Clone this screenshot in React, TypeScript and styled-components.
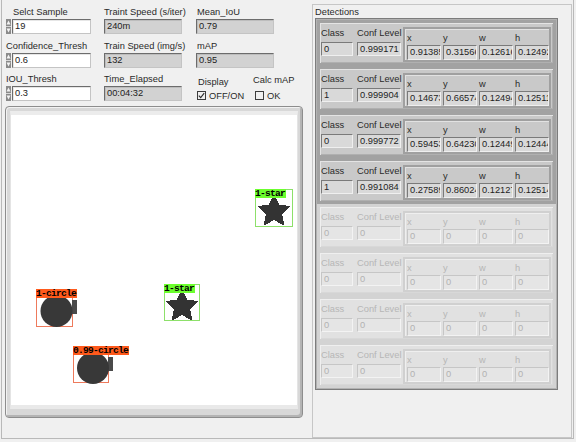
import React from "react";
import styled, { createGlobalStyle } from "styled-components";

const GlobalStyle = createGlobalStyle`
  html, body { margin: 0; padding: 0; background: #f0f0f0; }
  body {
    font-family: "Liberation Sans", Arial, sans-serif;
    font-size: 9.3px;
    color: #222;
  }
  * { box-sizing: border-box; }
`;

const Window = styled.div`
  width: 576px;
  height: 442px;
  padding-left: 1px;
  background: #f0f0f0;
  overflow: hidden;
`;

const Frame = styled.div`
  width: 573px;
  height: 439px;
  border: 1px solid #b9b9b9;
  border-top: none;
  display: flex;
`;

const LeftColumn = styled.div`
  width: 310px;
  padding: 6px 0 0 3px;
  display: flex;
  flex-direction: column;
`;

const Controls = styled.div`
  margin-left: 1px;
  display: grid;
  grid-template-columns: 98px 92px 1fr;
  grid-auto-rows: 28px;
  row-gap: 5.5px;
`;

const Control = styled.div`
  display: flex;
  flex-direction: column;
`;

const Label = styled.div<{ $indent?: number }>`
  height: 12px;
  line-height: 12px;
  padding-left: ${(p) => p.$indent ?? 0}px;
  color: #2a2a2a;
  white-space: nowrap;
`;

const NumWrap = styled.div`
  margin-top: 1px;
  display: flex;
  gap: 1px;
  height: 15px;
`;

const Box = styled.div<{ $w: number; $white?: boolean }>`
  width: ${(p) => p.$w}px;
  height: 15px;
  line-height: 13px;
  padding-left: 2px;
  background: ${(p) => (p.$white ? "#ffffff" : "#d2d2d2")};
  border: 1px solid;
  border-color: #6c6c6c #c4c4c4 #c4c4c4 #6c6c6c;
  box-shadow: inset 1px 1px 0 ${(p) => (p.$white ? "#e6e6e6" : "#bdbdbd")};
  color: #222;
  white-space: nowrap;
  overflow: hidden;
`;

const IndicatorBox = styled(Box)`
  margin-top: 1px;
`;

const CheckGroup = styled.div`
  display: flex;
`;

const CheckCol = styled.div<{ $w: number; $top: number; $gap: number }>`
  width: ${(p) => p.$w}px;
  padding-top: ${(p) => p.$top}px;
  display: flex;
  flex-direction: column;
  gap: ${(p) => p.$gap}px;
`;

const CheckLine = styled.div<{ $indent: number }>`
  display: flex;
  align-items: center;
  gap: 3px;
  height: 12px;
  padding-left: ${(p) => p.$indent}px;
  color: #2a2a2a;
`;

const CheckSquare = styled.span`
  width: 9px;
  height: 9px;
  border: 1px solid #3c3c3c;
  display: inline-flex;
  align-items: center;
  justify-content: center;
`;

const CanvasFrame = styled.div`
  margin-top: 5px;
  width: 298px;
  height: 312px;
  border: 1px solid #8d8d8d;
  border-radius: 4px;
  background: #d8d8d8;
  box-shadow: inset 1px 1px 0 #f2f2f2, inset -2px -2px 0 #b4b4b4;
  padding: 4px 4px 0 4px;
`;

const CanvasArea = styled.div`
  position: relative;
  width: 288px;
  height: 298px;
  background: #ffffff;
  border: 1px solid #e4e4e4;
  border-top: 4px solid #ececec;
  border-bottom: 4px solid #e9e9e9;
`;

const Detection = styled.div<{ $x: number; $y: number; $w: number; $h: number; $c: string }>`
  position: absolute;
  left: ${(p) => p.$x}px;
  top: ${(p) => p.$y}px;
  width: ${(p) => p.$w}px;
  height: ${(p) => p.$h}px;
  border: 1px solid ${(p) => p.$c};
`;

const Shape = styled.svg`
  position: absolute;
  left: -1px;
  top: -1px;
  overflow: visible;
`;

const DetLabel = styled.div<{ $bg: string }>`
  position: absolute;
  left: -1px;
  top: -1px;
  height: 9px;
  line-height: 9px;
  padding-right: 1px;
  background: ${(p) => p.$bg};
  font-family: "Liberation Mono", "Courier New", monospace;
  font-weight: bold;
  font-size: 9.6px;
  letter-spacing: -0.76px;
  color: #000;
  white-space: nowrap;
  overflow: hidden;
`;

const GroupBox = styled.div`
  margin-top: 4px;
  width: 260px;
  height: 434px;
  border: 1px solid #c6c6c6;
  padding: 1px 0 0 2px;
`;

const GroupTitle = styled.div`
  height: 12px;
  line-height: 12px;
  color: #2a2a2a;
`;

const ArrayFrame = styled.div`
  width: 243px;
  border: 1px solid #7c7c7c;
  padding: 1px;
  background: #b2b2b2;
  display: flex;
  flex-direction: column;
`;

const Row = styled.div<{ $on: boolean }>`
  height: 46px;
  border: 3px solid ${(p) => (p.$on ? "#a2a2a2" : "#d3d3d3")};
  box-shadow: inset 1px 1px 0 ${(p) => (p.$on ? "#e4e4e4" : "#efefef")},
    inset -1px -1px 0 ${(p) => (p.$on ? "#b0b0b0" : "#d8d8d8")};
  background: ${(p) => (p.$on ? "#c9c9c9" : "#e1e1e1")};
  padding: 4px 0 0 1px;
  display: flex;
  align-items: flex-start;
`;

const Fields = styled.div`
  display: grid;
  grid-template-columns: 32px 44px;
  column-gap: 4px;
`;

const FieldLabel = styled.div<{ $on: boolean }>`
  height: 12px;
  line-height: 12px;
  color: ${(p) => (p.$on ? "#2a2a2a" : "#b6b6b6")};
  white-space: nowrap;
`;

const ValueBox = styled.div<{ $on: boolean; $h: number; $top: number }>`
  margin-top: ${(p) => p.$top}px;
  height: ${(p) => p.$h}px;
  line-height: ${(p) => p.$h - 2}px;
  padding-left: 2px;
  background: ${(p) => (p.$on ? "#d9d9d9" : "#e5e5e5")};
  border: 1px solid;
  border-color: ${(p) =>
    p.$on ? "#7a7a7a #efefef #efefef #7a7a7a" : "#c6c6c6 #f3f3f3 #f3f3f3 #c6c6c6"};
  color: ${(p) => (p.$on ? "#1e1e1e" : "#b2b2b2")};
  white-space: nowrap;
  overflow: hidden;
`;

const Cluster = styled.div<{ $on: boolean }>`
  margin-left: 2px;
  width: 148px;
  height: 35px;
  border: 2px solid ${(p) => (p.$on ? "#a0a0a0" : "#d0d0d0")};
  box-shadow: inset 1px 1px 0 ${(p) => (p.$on ? "#e2e2e2" : "#efefef")};
  background: ${(p) => (p.$on ? "#c9c9c9" : "#e1e1e1")};
  padding: 3px 0 0 2px;
  display: grid;
  grid-template-columns: repeat(4, 34px);
  column-gap: 2px;
`;

const Spinner = () => (
  <svg width="5" height="15" viewBox="0 0 5 15">
    <rect x="0" y="0" width="5" height="15" fill="#d9d9d9" />
    <rect x="0" y="0" width="5" height="7" fill="#8a8a8a" />
    <rect x="0" y="8" width="5" height="7" fill="#8a8a8a" />
    <polygon points="0.5,5.5 2.5,1.5 4.5,5.5" fill="#f4f4f4" />
    <polygon points="0.5,9.5 2.5,13.5 4.5,9.5" fill="#f4f4f4" />
  </svg>
);

const CheckMark = () => (
  <svg width="7" height="7" viewBox="0 0 7 7">
    <polyline points="0.8,3.6 2.7,5.6 6.2,1.2" fill="none" stroke="#2b2b2b" strokeWidth="1.1" />
  </svg>
);

function starPoints(cx: number, cy: number, R: number, r: number) {
  const pts: string[] = [];
  for (let i = 0; i < 10; i++) {
    const a = ((-90 + i * 36) * Math.PI) / 180;
    const rad = i % 2 === 0 ? R : r;
    pts.push(`${(cx + rad * Math.cos(a)).toFixed(2)},${(cy + rad * Math.sin(a)).toFixed(2)}`);
  }
  return pts.join(" ");
}

type Det = {
  kind: "star" | "circle";
  label: string;
  x: number;
  y: number;
  w: number;
  h: number;
};

const dets: Det[] = [
  { kind: "star", label: "1-star", x: 244, y: 74, w: 38, h: 38 },
  { kind: "star", label: "1-star", x: 153, y: 169, w: 36, h: 37 },
  { kind: "circle", label: "1-circle", x: 25, y: 174, w: 37, h: 38 },
  { kind: "circle", label: "0.99-circle", x: 62, y: 231, w: 36, h: 37 },
];

const DetectionView = ({ d }: { d: Det }) => {
  const star = d.kind === "star";
  const line = star ? "#8de06a" : "#ee7a5c";
  const bg = star ? "#6cff2e" : "#ff5a1c";
  return (
    <Detection $x={d.x} $y={d.y} $w={d.w} $h={d.h} $c={line}>
      <Shape width={d.w} height={d.h}>
        {star ? (
          <polygon
            points={starPoints(d.w / 2, 22.5, 17.5, 8.6)}
            fill="#333333"
            shapeRendering="crispEdges"
          />
        ) : (
          <>
            <rect x={d.w - 1} y={11} width={5} height={14} fill="#4a4a4a" />
            <circle cx={d.w / 2 + 2} cy={22} r={16} fill="#383838" />
          </>
        )}
      </Shape>
      <DetLabel $bg={bg}>{d.label}</DetLabel>
    </Detection>
  );
};

type RowData = { cls: string; conf: string; xywh: string[]; on: boolean };

const rows: RowData[] = [
  { cls: "0", conf: "0.999171", xywh: ["0.91385", "0.31566", "0.12616", "0.12492"], on: true },
  { cls: "1", conf: "0.999904", xywh: ["0.14673", "0.66574", "0.12494", "0.12511"], on: true },
  { cls: "0", conf: "0.999772", xywh: ["0.59453", "0.64230", "0.12449", "0.12444"], on: true },
  { cls: "1", conf: "0.991084", xywh: ["0.27589", "0.86024", "0.12127", "0.12514"], on: true },
  { cls: "0", conf: "0", xywh: ["0", "0", "0", "0"], on: false },
  { cls: "0", conf: "0", xywh: ["0", "0", "0", "0"], on: false },
  { cls: "0", conf: "0", xywh: ["0", "0", "0", "0"], on: false },
  { cls: "0", conf: "0", xywh: ["0", "0", "0", "0"], on: false },
];

const DetectionRow = ({ r }: { r: RowData }) => (
  <Row $on={r.on}>
    <Fields>
      <FieldLabel $on={r.on}>Class</FieldLabel>
      <FieldLabel $on={r.on}>Conf Level</FieldLabel>
      <ValueBox $on={r.on} $h={14} $top={3}>{r.cls}</ValueBox>
      <ValueBox $on={r.on} $h={14} $top={3}>{r.conf}</ValueBox>
    </Fields>
    <Cluster $on={r.on}>
      {["x", "y", "w", "h"].map((k) => (
        <FieldLabel key={k} $on={r.on}>{k}</FieldLabel>
      ))}
      {r.xywh.map((v, i) => (
        <ValueBox key={i} $on={r.on} $h={15} $top={1}>{v}</ValueBox>
      ))}
    </Cluster>
  </Row>
);

export default function App() {
  return (
    <>
      <GlobalStyle />
      <Window>
        <Frame>
          <LeftColumn>
            <Controls>
              <Control>
                <Label $indent={7}>Selct Sample</Label>
                <NumWrap><Spinner /><Box $w={79} $white>19</Box></NumWrap>
              </Control>
              <Control>
                <Label>Traint Speed (s/iter)</Label>
                <IndicatorBox $w={78}>240m</IndicatorBox>
              </Control>
              <Control>
                <Label $indent={1}>Mean_IoU</Label>
                <IndicatorBox $w={78}>0.79</IndicatorBox>
              </Control>
              <Control>
                <Label>Confidence_Thresh</Label>
                <NumWrap><Spinner /><Box $w={79} $white>0.6</Box></NumWrap>
              </Control>
              <Control>
                <Label>Train Speed (img/s)</Label>
                <IndicatorBox $w={78}>132</IndicatorBox>
              </Control>
              <Control>
                <Label $indent={1}>mAP</Label>
                <IndicatorBox $w={78}>0.95</IndicatorBox>
              </Control>
              <Control>
                <Label>IOU_Thresh</Label>
                <NumWrap><Spinner /><Box $w={79} $white>0.3</Box></NumWrap>
              </Control>
              <Control>
                <Label>Time_Elapsed</Label>
                <IndicatorBox $w={78}>00:04:32</IndicatorBox>
              </Control>
              <CheckGroup>
                <CheckCol $w={57} $top={3} $gap={2}>
                  <Label $indent={2}>Display</Label>
                  <CheckLine $indent={1}>
                    <CheckSquare><CheckMark /></CheckSquare>
                    <span>OFF/ON</span>
                  </CheckLine>
                </CheckCol>
                <CheckCol $w={60} $top={1} $gap={4}>
                  <Label>Calc mAP</Label>
                  <CheckLine $indent={2}>
                    <CheckSquare />
                    <span>OK</span>
                  </CheckLine>
                </CheckCol>
              </CheckGroup>
            </Controls>
            <CanvasFrame>
              <CanvasArea>
                {dets.map((d, i) => (
                  <DetectionView key={i} d={d} />
                ))}
              </CanvasArea>
            </CanvasFrame>
          </LeftColumn>
          <GroupBox>
            <GroupTitle>Detections</GroupTitle>
            <ArrayFrame>
              {rows.map((r, i) => (
                <DetectionRow key={i} r={r} />
              ))}
            </ArrayFrame>
          </GroupBox>
        </Frame>
      </Window>
    </>
  );
}
